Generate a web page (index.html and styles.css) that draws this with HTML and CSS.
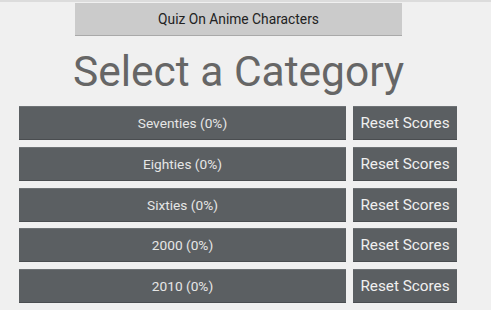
FILE: index.html
```html
<!DOCTYPE html>
<html>
<head>
<meta charset="utf-8">
<link rel="stylesheet" href="styles.css">
</head>
<body>
<div class="strip"></div>
<div class="app">
  <div class="topbtn">Quiz On Anime Characters</div>
  <h1 class="title">Select a Category</h1>
  <div class="rows">
    <div class="row"><div class="cat">Seventies (0%)</div><div class="reset">Reset Scores</div></div>
    <div class="row"><div class="cat">Eighties (0%)</div><div class="reset">Reset Scores</div></div>
    <div class="row"><div class="cat">Sixties (0%)</div><div class="reset">Reset Scores</div></div>
    <div class="row"><div class="cat">2000 (0%)</div><div class="reset">Reset Scores</div></div>
    <div class="row"><div class="cat">2010 (0%)</div><div class="reset">Reset Scores</div></div>
  </div>
</div>
</body>
</html>
```
FILE: styles.css
```css
html, body {
  margin: 0;
  padding: 0;
  background: #f0f0f0;
  font-family: Roboto, "Liberation Sans", sans-serif;
  width: 491px;
  height: 310px;
  overflow: hidden;
}
.strip {
  height: 2px;
  background: #dcdcdc;
}
.app {
  display: flex;
  flex-direction: column;
}
.topbtn {
  margin: 1px 0 0 75px;
  width: 327px;
  height: 33px;
  box-sizing: border-box;
  background: #cbcbcb;
  border-bottom: 1px solid #a9a9a9;
  color: #222;
  font-size: 13.8px;
  display: flex;
  align-items: center;
  justify-content: center;
}
.title {
  margin: 10px 0 0 0;
  width: 477px;
  text-align: center;
  font-weight: 400;
  font-size: 42.5px;
  line-height: 52px;
  color: #666;
}
.rows {
  margin: 8px 0 0 19px;
  display: flex;
  flex-direction: column;
  gap: 6.75px;
}
.row {
  display: flex;
  gap: 7px;
  height: 34px;
}
.cat, .reset {
  background: #5b5f62;
  border-top: 1px solid #6e7275;
  border-bottom: 1px solid #4a4d50;
  box-sizing: border-box;
  display: flex;
  align-items: center;
  justify-content: center;
}
.cat {
  width: 327px;
  color: #e6e6e6;
  font-size: 13.7px;
}
.reset {
  width: 104px;
  color: #f0f0f0;
  font-size: 15.3px;
}
```
